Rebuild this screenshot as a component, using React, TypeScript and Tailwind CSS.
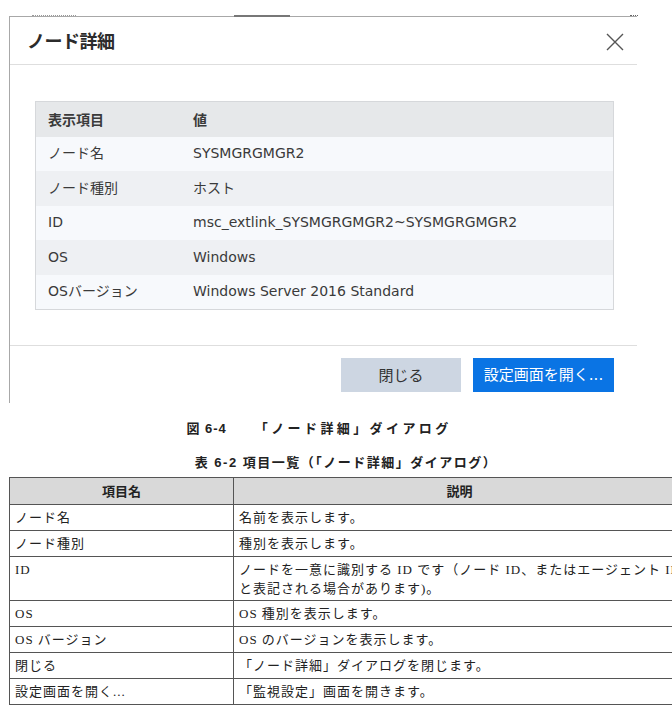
import React from "react";

const dialogRows = [
  { label: "ノード名", value: "SYSMGRGMGR2" },
  { label: "ノード種別", value: "ホスト" },
  { label: "ID", value: "msc_extlink_SYSMGRGMGR2~SYSMGRGMGR2" },
  { label: "OS", value: "Windows" },
  { label: "OSバージョン", value: "Windows Server 2016 Standard" },
];

const docRows = [
  { name: "ノード名", desc: ["名前を表示します。"] },
  { name: "ノード種別", desc: ["種別を表示します。"] },
  {
    name: "ID",
    desc: [
      "ノードを一意に識別する ID です（ノード ID、またはエージェント ID",
      "と表記される場合があります)。",
    ],
  },
  { name: "OS", desc: ["OS 種別を表示します。"] },
  { name: "OS バージョン", desc: ["OS のバージョンを表示します。"] },
  { name: "閉じる", desc: ["「ノード詳細」ダイアログを閉じます。"] },
  { name: "設定画面を開く...", desc: ["「監視設定」画面を開きます。"] },
];

const sans = "font-['DejaVu_Sans','Noto_Sans_CJK_JP',sans-serif]";
const serif = "font-['Liberation_Serif','Noto_Sans_CJK_JP',serif]";

const App: React.FC = () => {
  return (
    <div className="w-[672px] h-[723px] bg-white overflow-hidden relative">
      {/* screenshot of the dialog */}
      <div className="pt-[16px]">
        <div className="relative ml-[9px] w-[628px] h-[387px] border-l border-t border-[#a8a8a8] flex flex-col">
          {/* clipped bits of the page behind */}
          <div className="absolute -top-[2px] left-[22px] w-[44px] h-[2px] border-t border-dotted border-[#999]" />
          <div className="absolute -top-[2px] left-[224px] w-[56px] h-[2px] bg-[#777]" />
          <div className="absolute -top-[2px] left-[620px] w-[8px] h-[2px] border-t border-dotted border-[#666]" />

          <div className={`h-[48px] flex items-center justify-between pl-[17px] pr-[11px] border-b border-[#dedede] ${sans}`}>
            <span className="text-[18px] font-bold text-[#2b2b2b] tracking-[-0.5px] font-['Noto_Sans_CJK_JP',sans-serif]">
              ノード詳細
            </span>
            <svg width="22" height="22" viewBox="0 0 22 22" className="mt-[2px]">
              <path d="M3 3 L19 19 M19 3 L3 19" stroke="#555" strokeWidth="1.4" fill="none" />
            </svg>
          </div>

          <div className="h-[281px] border-b border-[#dedede] pt-[36px] pl-[25px]">
            <div className={`w-[579px] border border-[#d6d8db] text-[14px] text-[#3a3a3a] ${sans}`}>
              <div className="h-[34.5px] flex items-center bg-[#e6e8ea] font-bold">
                <span className="w-[157px] pl-[12px] font-['Noto_Sans_CJK_JP',sans-serif]">表示項目</span>
                <span className="font-['Noto_Sans_CJK_JP',sans-serif]">値</span>
              </div>
              {dialogRows.map((r, i) => (
                <div
                  key={r.label}
                  className={`h-[34.5px] flex items-center ${i % 2 === 0 ? "bg-[#f7f9fc]" : "bg-[#eef0f3]"}`}
                >
                  <span className="w-[157px] pl-[12px]">{r.label}</span>
                  <span>{r.value}</span>
                </div>
              ))}
            </div>
          </div>

          <div className={`flex justify-end gap-[12px] pt-[12px] pr-[23px] text-[15px] ${sans}`}>
            <button className="w-[120px] h-[34px] bg-[#cdd6e2] text-[#333] font-['Noto_Sans_CJK_JP',sans-serif]">
              閉じる
            </button>
            <button className="w-[141px] h-[34px] bg-[#0a74e4] text-white">設定画面を開く...</button>
          </div>
        </div>
      </div>

      {/* captions */}
      <div className="font-['Liberation_Sans','Noto_Sans_CJK_JP',sans-serif] font-bold text-[13px] text-[#222] flex flex-col items-center">
        <div className="mt-[17px] mr-[34px] h-[18px] leading-[18px] whitespace-nowrap">
          <span className="tracking-[1px]">図 6-4</span>
          <span className="ml-[28px] tracking-[3.4px]">「ノード詳細」ダイアログ</span>
        </div>
        <div className="mt-[16px] ml-[20px] tracking-[1.5px] h-[18px] leading-[18px] whitespace-nowrap">
          表 6-2 項目一覧（「ノード詳細」ダイアログ）
        </div>
      </div>

      {/* item table */}
      <div className={`absolute left-[9px] top-[477px] w-[676px] border-t border-l border-[#555] text-[13px] text-[#222] ${serif}`}>
        <div className="flex h-[27px] bg-[#d9d9d9] border-b border-[#555] font-bold font-['Noto_Sans_CJK_JP',sans-serif]">
          <div className="w-[224px] border-r border-[#555] flex items-center justify-center">項目名</div>
          <div className="flex-1 flex items-center justify-center">説明</div>
        </div>
        {docRows.map((r) => (
          <div
            key={r.name}
            className={`flex border-b border-[#555] ${r.desc.length > 1 ? "h-[44px]" : "h-[26px]"}`}
          >
            <div className="w-[224px] border-r border-[#555] pl-[5px] pt-[3px] tracking-[1px]">{r.name}</div>
            <div className="flex-1 pl-[5px] pt-[3px] tracking-[1px] leading-[19px] whitespace-nowrap">
              {r.desc.map((d) => (
                <div key={d}>{d}</div>
              ))}
            </div>
          </div>
        ))}
      </div>
    </div>
  );
};

export default App;
